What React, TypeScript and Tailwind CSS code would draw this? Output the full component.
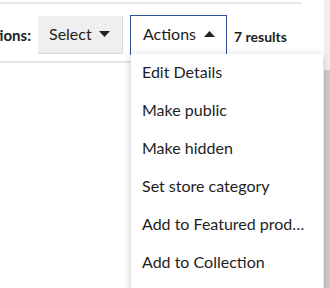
import React from "react";

const items = [
  "Edit Details",
  "Make public",
  "Make hidden",
  "Set store category",
  "Add to Featured products",
  "Add to Collection",
];

function Caret({ up }: { up?: boolean }) {
  return (
    <svg width="11" height="6" viewBox="0 0 11 6" className="shrink-0">
      {up ? <path d="M0 6 L5.5 0 L11 6 Z" fill="#222" /> : <path d="M0 0 L5.5 6 L11 0 Z" fill="#222" />}
    </svg>
  );
}

export default function App() {
  return (
    <div
      className="relative flex w-[330px] h-[288px] overflow-hidden bg-white text-[#1e1e1e]"
      style={{ fontFamily: "Lato, 'Open Sans', sans-serif" }}
    >
      <div className="flex flex-col w-[324px]">
        <div className="mt-[2px] h-[2px] w-[302px] bg-[#e8e8e8]" />
        <div className="flex items-start h-[57px] pt-[11px]">
          <div className="flex justify-end w-[31px] overflow-hidden mt-[9px]">
            <span className="shrink-0 whitespace-nowrap text-[15px] font-bold">Bulk actions:</span>
          </div>
          <div className="ml-[7px] mt-[1px] flex items-center gap-[7px] h-[38px] w-[85px] pl-[11px] pb-[2px] bg-[#efefef] border-b border-r border-[#d9d9d9] text-[16px]">
            <span>Select</span>
            <Caret />
          </div>
          <div className="relative ml-[7px] flex items-center gap-[8px] h-[40px] w-[97px] pl-[12px] pb-[3px] border border-b-0 border-[#2a5298] text-[16px] bg-white z-10">
            <span>Actions</span>
            <Caret up />
          </div>
          <span className="ml-[7px] mt-[11px] text-[14px] font-bold whitespace-nowrap">7 results</span>
        </div>
        <div className="h-[2px] w-full bg-[#e6e6e6]" />
      </div>
      <div className="w-[6px] flex flex-col bg-[#f0f0f0]">
        <div className="h-[70px]" />
        <div className="flex-1 bg-[#cdcdcd]" />
      </div>
      <div className="absolute left-[131px] top-[54px] w-[192px] h-[260px] bg-white shadow-[0_2px_8px_rgba(0,0,0,0.22)] z-20">
        {items.map((t) => (
          <div key={t} className="h-[38px] flex items-center pl-[11px] pr-[18px] pb-[2px] text-[16px]">
            <span className="truncate">{t}</span>
          </div>
        ))}
      </div>
    </div>
  );
}
